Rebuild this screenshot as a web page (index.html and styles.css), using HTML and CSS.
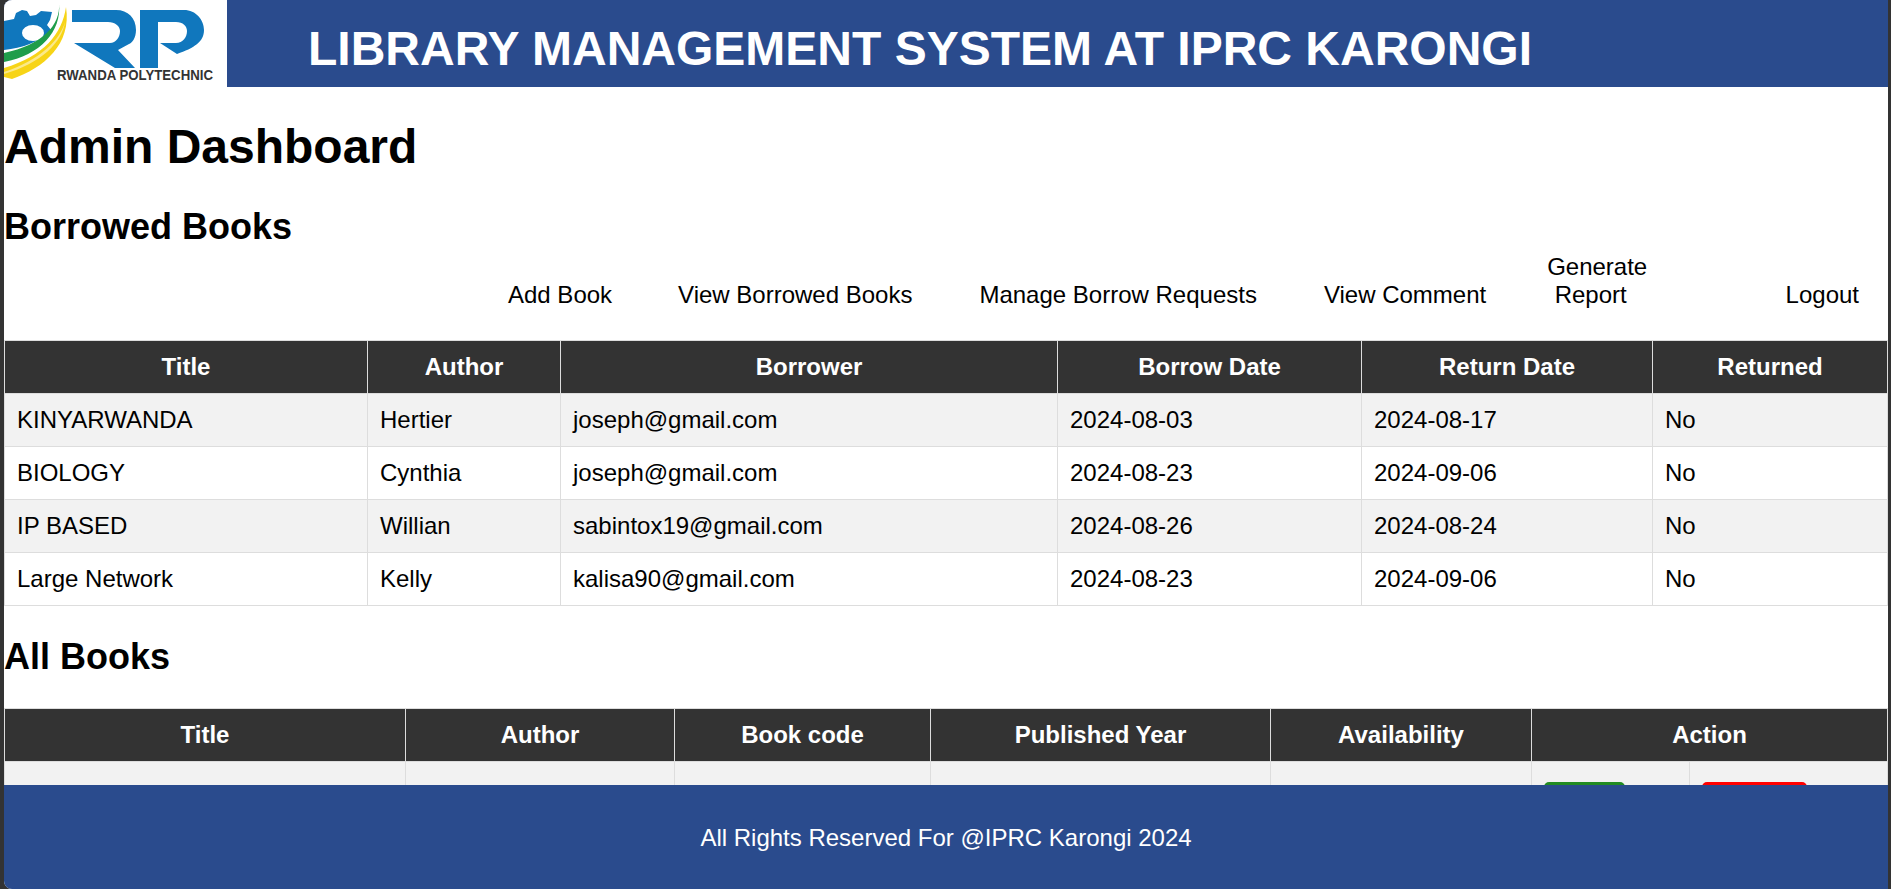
FILE: index.html
```html
<!DOCTYPE html>
<html>
	<head>
		<meta charset="UTF-8">
		<title>Admin Dashboard</title>
		<link rel="stylesheet" href="styles.css">
	</head>
	<body>
		<div class="page">
			<header class="top">
				<div class="logo">
					<svg width="227" height="87" viewBox="0 0 227 87">
						<path class="blue" d="M4 21L14 19L16 13L22 10L27 11L30 16L36 15L41 11L52 12L50 20L47 25L51 30L47 36L38 43L26 46L4 52Z"/>
						<ellipse class="hub" cx="33" cy="33" rx="11" ry="8"/>
						<path class="gap" d="M61 3C62 26 42 46 4 50V66L40 60L64 30Z"/>
						<path class="green" d="M59 3C61 25 42 45 4 53V62C40 55 62 32 59 3Z"/>
						<path class="yellow" d="M66 7C62 34 44 56 4 68V77L12 79C44 68 72 44 66 7Z"/>
						<path class="pale" d="M65 22C60 40 40 60 4 72V74C42 63 62 42 65 22Z"/>
						<path class="blue" d="M72 10H116C128 10 136 18 136 30C136 38 132 43 129 44L118 50L135 68H115L74 43H110C116 43 120 37 120 31C120 26 115 22 108 22H72Z"/>
						<path class="blue" d="M140 10H184C196 10 204 20 204 30C204 42 194 48 177 54L160 43H176C183 43 187 37 187 31C187 26 183 22 176 22H158V68H140Z"/>
						<text class="logo-text" x="57" y="80" textLength="156" lengthAdjust="spacingAndGlyphs">RWANDA POLYTECHNIC</text>
					</svg>
				</div>
				<h2 class="site-title">LIBRARY MANAGEMENT SYSTEM AT IPRC KARONGI</h2>
			</header>
			<main class="content">
				<h1>Admin Dashboard</h1>
				<h2>Borrowed Books</h2>
				<ul class="nav">
					<li class="nav-add"><a href="#">Add Book</a></li>
					<li class="nav-view"><a href="#">View Borrowed Books</a></li>
					<li class="nav-manage"><a href="#">Manage Borrow Requests</a></li>
					<li class="nav-comment"><a href="#">View Comment</a></li>
					<li class="nav-report"><a href="#">Generate <span>Report</span></a></li>
					<li class="nav-logout"><a href="#">Logout</a></li>
				</ul>
				<table class="borrowed">
					<tr><th>Title</th><th>Author</th><th>Borrower</th><th>Borrow Date</th><th>Return Date</th><th>Returned</th></tr>
					<tr><td>KINYARWANDA</td><td>Hertier</td><td>joseph@gmail.com</td><td>2024-08-03</td><td>2024-08-17</td><td>No</td></tr>
					<tr><td>BIOLOGY</td><td>Cynthia</td><td>joseph@gmail.com</td><td>2024-08-23</td><td>2024-09-06</td><td>No</td></tr>
					<tr><td>IP BASED</td><td>Willian</td><td>sabintox19@gmail.com</td><td>2024-08-26</td><td>2024-08-24</td><td>No</td></tr>
					<tr><td>Large Network</td><td>Kelly</td><td>kalisa90@gmail.com</td><td>2024-08-23</td><td>2024-09-06</td><td>No</td></tr>
				</table>
				<h2 class="all-title">All Books</h2>
				<table class="books">
					<colgroup>
						<col class="c-title"><col class="c-author"><col class="c-code"><col class="c-year"><col class="c-avail"><col class="c-edit"><col>
					</colgroup>
					<tr><th>Title</th><th>Author</th><th>Book code</th><th>Published Year</th><th>Availability</th><th colspan="2">Action</th></tr>
					<tr class="book-row">
						<td>&nbsp;</td><td></td><td></td><td></td><td></td>
						<td><a class="btn btn-edit" href="#">Edit</a></td>
						<td><a class="btn btn-delete" href="#">Delete</a></td>
					</tr>
				</table>
			</main>
			<footer class="bottom">All Rights Reserved For @IPRC Karongi 2024</footer>
		</div>
	</body>
</html>
```

FILE: styles.css
```css
*{
	box-sizing: border-box;
}
html,body{
	height: 100%;
	margin: 0;
	overflow: hidden;
}
body{
	background-color: #333;
	font-family: "Liberation Sans", Arial, sans-serif;
	color: #000;
	padding: 0 3px 0 4px;
}
.page{
	height: 100%;
	background-color: #fff;
	display: flex;
	flex-direction: column;
	overflow: hidden;
	border-top-left-radius: 8px;
	border-bottom-left-radius: 8px;
}
.top{
	flex: none;
	height: 87px;
	display: flex;
	background-color: #2a4b8d;
}
.logo{
	width: 223px;
	height: 87px;
	background-color: #fff;
	margin-right: 81px;
}
.logo svg{
	display: block;
	margin-left: -4px;
}
.blue{ fill: #1077bd; }
.hub,.gap{ fill: #fff; }
.green{ fill: #1f9d4a; }
.yellow{ fill: #f7d417; }
.pale{ fill: #fbe98a; }
.logo-text{
	font-size: 14px;
	font-weight: bold;
	fill: #333;
}
.site-title{
	margin: 0;
	padding-top: 21px;
	color: #fff;
	font-size: 48px;
	line-height: 55px;
	font-weight: bold;
}
.content{
	flex: 1;
	min-height: 0;
	overflow: hidden;
}
h1{
	margin: 32px 0 0;
	font-size: 48px;
	line-height: 55px;
}
h2{
	font-size: 36px;
}
.content h2{
	margin: 32px 0 0;
	line-height: 41px;
}
.nav{
	list-style: none;
	margin: 0;
	padding: 0 29px 31px 0;
	height: 93px;
	display: flex;
	align-items: flex-end;
	font-size: 24px;
	line-height: 28px;
}
.nav a{
	color: #000;
	text-decoration: none;
}
.nav-add{ margin-left: 504px; }
.nav-view{ margin-left: 66px; }
.nav-manage,.nav-comment{ margin-left: 67px; }
.nav-report{ margin-left: 51px; width: 120px; text-align: center; }
.nav-report span{
	display: block;
	padding-right: 13px;
}
.nav-logout{ margin-left: auto; }
table{
	width: 100%;
	border-collapse: collapse;
	font-size: 24px;
	table-layout: fixed;
}
th,td{
	border: 1px solid #ddd;
	height: 53px;
	padding: 0 12px;
	text-align: left;
}
th{
	background-color: #333;
	color: #fff;
	text-align: center;
	font-weight: bold;
}
tr:nth-child(even) td{
	background-color: #f2f2f2;
}
.borrowed th:nth-child(1){ width: 363px; }
.borrowed th:nth-child(2){ width: 193px; }
.borrowed th:nth-child(3){ width: 497px; }
.borrowed th:nth-child(4){ width: 304px; }
.borrowed th:nth-child(5){ width: 291px; }
.c-title{ width: 401px; }
.c-author{ width: 269px; }
.c-code{ width: 256px; }
.c-year{ width: 340px; }
.c-avail{ width: 261px; }
.c-edit{ width: 158px; }
.book-row td{
	padding-top: 20px;
	vertical-align: top;
}
.content .all-title{
	margin: 30px 0 31px;
}
.btn{
	display: inline-block;
	padding: 10px 20px;
	color: #fff;
	border-radius: 5px;
	text-decoration: none;
}
.btn-edit{ background-color: #228b22; }
.btn-delete{ background-color: #f00; padding: 10px 18px; }
.bottom{
	flex: none;
	height: 104px;
	padding-top: 2px;
	background-color: #2a4b8d;
	color: #fff;
	font-size: 24px;
	display: flex;
	align-items: center;
	justify-content: center;
}
```
